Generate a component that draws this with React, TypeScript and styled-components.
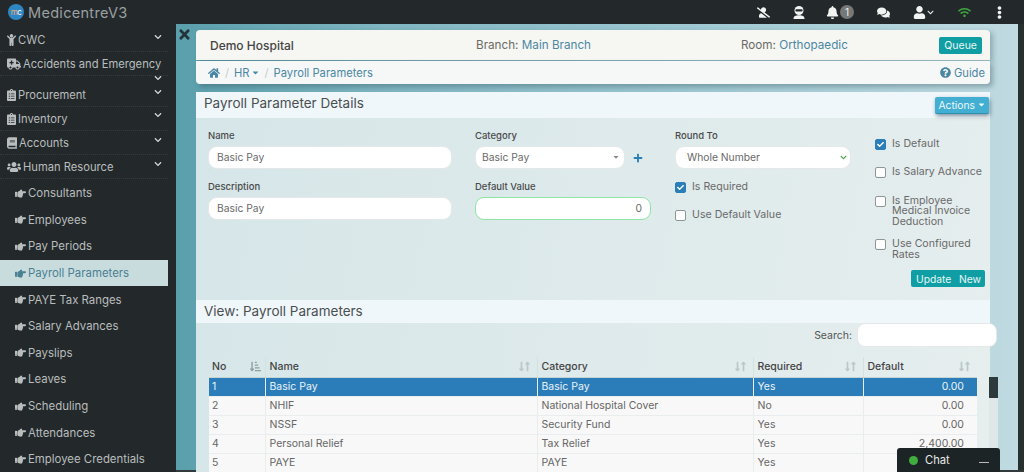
import React from 'react'
import styled, { createGlobalStyle } from 'styled-components'
import {
  FaAmbulance, FaBell, FaBook, FaCaretDown, FaCheck, FaChevronDown, FaChild, FaClipboardList,
  FaComments, FaEllipsisV, FaHandPointRight, FaHome, FaPlus, FaQuestionCircle, FaSortAmountDownAlt,
  FaTimes, FaUser, FaUserSlash, FaUsers, FaWifi, FaLongArrowAltDown, FaLongArrowAltUp,
} from 'react-icons/fa'

const GlobalStyle = createGlobalStyle`
  html, body { margin: 0; height: 100%; overflow: hidden; }
  body { font-family: Inter, "Liberation Sans", sans-serif; font-size: 11.5px; color: #555; }
  * { box-sizing: border-box; }
`

const Page = styled.div`
  width: 1024px;
  height: 472px;
  display: flex;
  flex-direction: column;
  overflow: hidden;
  position: relative;
  background: #222a2c;
`

const TopBar = styled.header`
  height: 24px;
  flex: none;
  display: flex;
  align-items: center;
  padding: 0 10px 0 8px;
  background: #23292b;
  color: #f2f4f4;
`

const Brand = styled.div`
  display: flex;
  align-items: center;
  gap: 4px;
  color: #9aa0a1;
  font-size: 14.5px;
  letter-spacing: 0.3px;
  flex: 1;
`

const Logo = styled.span`
  width: 16px;
  height: 16px;
  border-radius: 50%;
  background: #2f86c4;
  color: #fff;
  font-size: 8px;
  line-height: 16px;
  text-align: center;
  letter-spacing: -0.5px;
  em { font-style: normal; color: #f0b070; }
`

const TopIcons = styled.div`
  display: flex;
  align-items: center;
  font-size: 13px;
`

const TopIcon = styled.span<{ $w: number; $color?: string }>`
  width: ${p => p.$w}px;
  display: flex;
  align-items: center;
  justify-content: center;
  gap: 1px;
  color: ${p => p.$color || '#f2f4f4'};
`

const Badge = styled.span`
  width: 14px;
  height: 14px;
  border-radius: 50%;
  background: #777;
  color: #eee;
  font-size: 10px;
  line-height: 14px;
  text-align: center;
`

const Main = styled.div`
  flex: 1;
  min-height: 0;
  display: flex;
`

const Sidebar = styled.nav`
  width: 176px;
  flex: none;
  padding-right: 8px;
  background: #23292b;
  color: #b9bdbd;
`

const MenuItem = styled.div<{ $h: number; $pad: number; $iconW: number }>`
  position: relative;
  height: ${p => p.$h}px;
  padding: ${p => p.$pad}px 0 0 7px;
  display: flex;
  align-items: flex-start;
  gap: 2px;
  font-size: 11.2px;
  line-height: 18px;
  border-bottom: 1px dotted #353c3e;
  white-space: nowrap;
  svg.lead { width: ${p => p.$iconW}px; height: 12px; margin-top: 3px; flex: none; }
`

const Chevron = styled(FaChevronDown)<{ $top: number }>`
  position: absolute;
  right: 6px;
  top: ${p => p.$top}px;
  font-size: 8px;
  color: #d5d8d8;
`

const SubList = styled.div`
  margin-top: 1px;
`

const SubItem = styled.div<{ $active?: boolean }>`
  height: 26.6px;
  padding-left: 15px;
  display: flex;
  align-items: center;
  gap: 2px;
  font-size: 11.4px;
  color: ${p => (p.$active ? '#4a8094' : '#b9bdbd')};
  background: ${p => (p.$active ? '#c9dcdd' : 'transparent')};
  svg { font-size: 11px; }
`

const Content = styled.main`
  flex: 1;
  min-width: 0;
  display: flex;
  background: linear-gradient(90deg, #5a9fac 0%, #7fb6c1 25%, #a6cdd6 70%, #c0dbe1 100%);
  border-bottom: 2px solid #333a3c;
`

const CloseColumn = styled.div`
  width: 20px;
  flex: none;
  padding: 3px 0 0 1px;
  color: #23333a;
  font-size: 15px;
`

const Column = styled.div`
  width: 794px;
  flex: none;
  padding-top: 6px;
`

const HospitalBar = styled.div`
  height: 30px;
  display: grid;
  grid-template-columns: 266px 265px 1fr auto;
  align-items: center;
  padding: 0 8px 0 14px;
  background: #f6f6f3;
  border-radius: 4px 4px 0 0;
  box-shadow: 3px 2px 5px rgba(40, 70, 80, 0.3);
  font-size: 11.7px;
  color: #6b6b66;
`

const HospitalName = styled.b`
  font-weight: 500;
  color: #444;
  font-size: 12px;
`

const Link = styled.span`
  color: #4b87a3;
`

const QueueButton = styled.span`
  background: #0f9ea3;
  color: #e8f6f6;
  border-radius: 2px;
  padding: 0 5px;
  height: 17px;
  line-height: 17px;
  font-size: 10.5px;
`

const Breadcrumb = styled.div`
  height: 23px;
  margin-top: 1px;
  display: flex;
  align-items: center;
  gap: 5px;
  padding: 0 5px 0 12px;
  background: #f6f8f8;
  border-radius: 0 0 4px 4px;
  box-shadow: 3px 3px 5px rgba(40, 70, 80, 0.35);
  color: #4b87a3;
  font-size: 11.2px;
`

const Slash = styled.span`
  color: #c4cccc;
`

const HrCrumb = styled.span`
  display: flex;
  align-items: center;
  gap: 1px;
`

const Guide = styled.span`
  margin-left: auto;
  display: flex;
  align-items: center;
  gap: 3px;
  color: #4b87a3;
`

const Panel = styled.section`
  margin-top: 8px;
  background: linear-gradient(100deg, #d6e6e8, #e6eeee);
`

const PanelHead = styled.div<{ $h: number; $lift?: number }>`
  height: ${p => p.$h}px;
  display: flex;
  align-items: center;
  justify-content: space-between;
  padding: 0 1px 0 8px;
  background: #f0f7fb;
  font-size: 13.5px;
  color: #4a4f50;
  & > span:first-child { margin-top: ${p => -(p.$lift ?? 0)}px; }
`

const ActionsButton = styled.span`
  display: flex;
  align-items: center;
  gap: 2px;
  height: 17px;
  padding: 0 3px;
  background: #42aed2;
  color: #eef8fb;
  font-size: 10.3px;
  border-radius: 2px;
  box-shadow: 1px 2px 4px rgba(30, 60, 80, 0.55);
  border-bottom: 1px solid #2d8fb0;
`

const FormGrid = styled.div`
  height: 182px;
  display: grid;
  grid-template-columns: 267px 200px 200px 110px;
  padding: 12px 0 0 12px;
`

const Stack = styled.div<{ $w: number }>`
  width: ${p => p.$w}px;
  display: flex;
  flex-direction: column;
`

const Label = styled.label`
  display: block;
  font-size: 9.5px;
  font-weight: 500;
  color: #4a4a4a;
  line-height: 12px;
  margin-bottom: 4px;
`

const Field = styled.div<{ $right?: boolean; $focus?: boolean; $w?: number; $pl?: number; $pr?: number }>`
  height: 23px;
  width: ${p => (p.$w ? `${p.$w}px` : '100%')};
  display: flex;
  align-items: center;
  justify-content: ${p => (p.$right ? 'flex-end' : 'space-between')};
  padding: 0 ${p => p.$pr ?? 8}px 1px ${p => p.$pl ?? 8}px;
  background: #fff;
  border: 1px solid ${p => (p.$focus ? '#8fe6a4' : '#e4e8e8')};
  border-radius: 9px;
  font-size: 10.3px;
  color: #6a6a6a;
`

const Gap = styled.div<{ $h: number }>`
  height: ${p => p.$h}px;
  flex: none;
`

const Inline = styled.div`
  display: flex;
  align-items: center;
  justify-content: space-between;
`

const PlusIcon = styled(FaPlus)`
  font-size: 10px;
  color: #2a7fb8;
  margin-right: 8px;
`

const GreenChevron = styled(FaChevronDown)`
  font-size: 7px;
  color: #3b9a3b;
`

const CheckRow = styled.div<{ $mb?: number }>`
  display: flex;
  align-items: flex-start;
  gap: 6px;
  font-size: 10.6px;
  line-height: 10.4px;
  color: #6a6a6a;
  margin-bottom: ${p => p.$mb ?? 0}px;
`

const Box = styled.span<{ $on?: boolean }>`
  width: 11px;
  height: 11px;
  flex: none;
  border-radius: 2px;
  background: ${p => (p.$on ? '#2a7fb8' : '#fff')};
  border: 1px solid ${p => (p.$on ? '#2a7fb8' : '#8f9696')};
  color: #fff;
  display: flex;
  align-items: center;
  justify-content: center;
  font-size: 7px;
`

const UpdateBar = styled.div`
  align-self: flex-end;
  margin-top: 10px;
  width: 74px;
  height: 17px;
  display: flex;
  align-items: center;
  justify-content: space-between;
  padding: 0 4px 0 5px;
  background: #0f9ea3;
  color: #e8f6f6;
  border-radius: 2px;
  font-size: 10.3px;
`

const SearchRow = styled.div`
  display: flex;
  align-items: center;
  justify-content: flex-end;
  gap: 5px;
  margin-right: -7px;
  font-size: 10.5px;
`

const SearchInput = styled.div`
  width: 140px;
  height: 24px;
  background: #fff;
  border-radius: 8px;
  border: 1px solid #e4e8e8;
`

const TableWrap = styled.div`
  position: relative;
  margin: 10px 13px 0 13px;
`

const Table = styled.table`
  width: 768px;
  border-collapse: collapse;
  table-layout: fixed;
  font-size: 10.5px;
`

const Th = styled.th<{ $w: number }>`
  width: ${p => p.$w}px;
  height: 20px;
  padding: 0 4px 0 4px;
  font-weight: 500;
  text-align: left;
  color: #444;
  border-left: 1px solid #d5e0e0;
  border-bottom: 1px solid #c4d3d3;
  &:first-child { border-left: none; padding-left: 3px; }
`

const ThInner = styled.span`
  display: flex;
  align-items: center;
  justify-content: space-between;
`

const SortIcons = styled.span<{ $dark?: boolean }>`
  display: flex;
  font-size: 11px;
  color: ${p => (p.$dark ? '#8f9e9e' : '#bcc8c8')};
  svg + svg { margin-left: -5px; }
`

const Tr = styled.tr<{ $selected?: boolean }>`
  background: ${p => (p.$selected ? '#2a7db8' : '#f8f8f8')};
  color: ${p => (p.$selected ? '#eaf3f9' : '#666')};
`

const Td = styled.td<{ $right?: boolean }>`
  height: 19px;
  padding: 0 ${p => (p.$right ? '13px' : '4px')} 0 4px;
  text-align: ${p => (p.$right ? 'right' : 'left')};
  border-left: 1px solid #e9eded;
  border-bottom: 1px solid #e9eded;
  white-space: nowrap;
  &:first-child { border-left: none; padding-left: 3px; }
`

const ScrollTrack = styled.div`
  position: absolute;
  left: 780px;
  top: 20px;
  width: 9px;
  height: 120px;
  background: #dfe7e8;
`

const ScrollThumb = styled.div`
  height: 21px;
  background: #2c3a3c;
`

const RightEdge = styled.div`
  flex: 1;
  margin-left: 28px;
  background: #26302f;
`

const ChatWidget = styled.div`
  position: absolute;
  left: 897px;
  top: 448px;
  width: 103px;
  height: 24px;
  display: flex;
  align-items: center;
  gap: 7px;
  padding: 0 11px 0 12px;
  background: #1d2426;
  border-radius: 3px 3px 0 0;
  color: #e6e8e8;
  font-size: 11.2px;
`

const ChatDot = styled.span`
  width: 9px;
  height: 9px;
  border-radius: 50%;
  background: #3fae3f;
`

const ChatMin = styled.span`
  margin-left: auto;
  width: 10px;
  height: 1px;
  margin-top: 4px;
  background: #bbb;
`

const AgentIcon = () => (
  <svg width="14" height="13" viewBox="0 0 14 13">
    <circle cx="7" cy="4.5" r="4.5" fill="currentColor" />
    <rect x="3.4" y="3.2" width="7.2" height="2.2" rx="1" fill="#23292b" />
    <path d="M1.5 13 C1.5 10 3.5 9.2 7 9.2 C10.5 9.2 12.5 10 12.5 13 Z" fill="currentColor" />
  </svg>
)

const menu = [
  { icon: <FaChild className="lead" />, label: 'CWC', h: 28, pad: 7, top: 9, iconW: 9 },
  { icon: <FaAmbulance className="lead" />, label: 'Accidents and Emergency', h: 24, pad: 3, top: 22, iconW: 14 },
  { icon: <FaClipboardList className="lead" />, label: 'Procurement', h: 31, pad: 10, top: 12, iconW: 9 },
  { icon: <FaClipboardList className="lead" />, label: 'Inventory', h: 24, pad: 3, top: 4, iconW: 9 },
  { icon: <FaBook className="lead" />, label: 'Accounts', h: 24, pad: 3, top: 5, iconW: 10 },
  { icon: <FaUsers className="lead" />, label: 'Human Resource', h: 24, pad: 3, top: 5, iconW: 14 },
]

const subMenu = [
  'Consultants', 'Employees', 'Pay Periods', 'Payroll Parameters', 'PAYE Tax Ranges', 'Salary Advances',
  'Payslips', 'Leaves', 'Scheduling', 'Attendances', 'Employee Credentials',
]

const columns = [
  { name: 'No', w: 56 },
  { name: 'Name', w: 272 },
  { name: 'Category', w: 216 },
  { name: 'Required', w: 110 },
  { name: 'Default', w: 114 },
]

const rows = [
  ['1', 'Basic Pay', 'Basic Pay', 'Yes', '0.00'],
  ['2', 'NHIF', 'National Hospital Cover', 'No', '0.00'],
  ['3', 'NSSF', 'Security Fund', 'Yes', '0.00'],
  ['4', 'Personal Relief', 'Tax Relief', 'Yes', '2,400.00'],
  ['5', 'PAYE', 'PAYE', 'Yes', ''],
]

export default function App() {
  return (
    <Page>
      <GlobalStyle />
      <TopBar>
        <Brand><Logo><em>m</em>c</Logo>MedicentreV3</Brand>
        <TopIcons>
          <TopIcon $w={36}><FaUserSlash /></TopIcon>
          <TopIcon $w={36}><AgentIcon /></TopIcon>
          <TopIcon $w={46}><FaBell /><Badge>1</Badge></TopIcon>
          <TopIcon $w={40}><FaComments /></TopIcon>
          <TopIcon $w={41}><FaUser /><FaChevronDown size={7} /></TopIcon>
          <TopIcon $w={40} $color="#3fa53f"><FaWifi /></TopIcon>
          <TopIcon $w={30}><FaEllipsisV /></TopIcon>
        </TopIcons>
      </TopBar>
      <Main>
        <Sidebar>
          {menu.map(m => (
            <MenuItem key={m.label} $h={m.h} $pad={m.pad} $iconW={m.iconW}>
              {m.icon}{m.label}
              <Chevron $top={m.top} />
            </MenuItem>
          ))}
          <SubList>
            {subMenu.map(s => (
              <SubItem key={s} $active={s === 'Payroll Parameters'}>
                <FaHandPointRight />{s}
              </SubItem>
            ))}
          </SubList>
        </Sidebar>
        <Content>
          <CloseColumn><FaTimes /></CloseColumn>
          <Column>
            <HospitalBar>
              <HospitalName>Demo Hospital</HospitalName>
              <span>Branch: <Link>Main Branch</Link></span>
              <span>Room: <Link>Orthopaedic</Link></span>
              <QueueButton>Queue</QueueButton>
            </HospitalBar>
            <Breadcrumb>
              <FaHome size={12} />
              <Slash>/</Slash>
              <HrCrumb>HR <FaCaretDown size={9} /></HrCrumb>
              <Slash>/</Slash>
              <span>Payroll Parameters</span>
              <Guide><FaQuestionCircle size={11} />Guide</Guide>
            </Breadcrumb>
            <Panel>
              <PanelHead $h={26} $lift={4}>
                <span>Payroll Parameter Details</span>
                <ActionsButton>Actions <FaCaretDown size={9} /></ActionsButton>
              </PanelHead>
              <FormGrid>
                <Stack $w={244}>
                  <Label>Name</Label>
                  <Field>Basic Pay</Field>
                  <Gap $h={12} />
                  <Label>Description</Label>
                  <Field>Basic Pay</Field>
                </Stack>
                <Stack $w={176}>
                  <Label>Category</Label>
                  <Inline>
                    <Field $w={150} $pl={6} $pr={4}>Basic Pay<FaCaretDown size={8} color="#888" /></Field>
                    <PlusIcon />
                  </Inline>
                  <Gap $h={12} />
                  <Label>Default Value</Label>
                  <Field $right $focus>0</Field>
                </Stack>
                <Stack $w={176}>
                  <Label>Round To</Label>
                  <Field $pl={11} $pr={3}>Whole Number<GreenChevron /></Field>
                  <Gap $h={13} />
                  <CheckRow $mb={17}><Box $on><FaCheck /></Box>Is Required</CheckRow>
                  <CheckRow><Box />Use Default Value</CheckRow>
                </Stack>
                <Stack $w={110}>
                  <Gap $h={9} />
                  <CheckRow $mb={17}><Box $on><FaCheck /></Box>Is Default</CheckRow>
                  <CheckRow $mb={18}><Box />Is Salary Advance</CheckRow>
                  <CheckRow $mb={12}><Box /><span>Is Employee Medical Invoice Deduction</span></CheckRow>
                  <CheckRow><Box /><span>Use Configured Rates</span></CheckRow>
                  <UpdateBar><span>Update</span><span>New</span></UpdateBar>
                </Stack>
              </FormGrid>
              <PanelHead $h={23} $lift={1}><span>View: Payroll Parameters</span></PanelHead>
              <SearchRow>Search:<SearchInput /></SearchRow>
              <TableWrap>
                <Table>
                  <thead>
                    <tr>
                      {columns.map((c, i) => (
                        <Th key={c.name} $w={c.w}>
                          <ThInner>
                            {c.name}
                            {i === 0
                              ? <SortIcons $dark><FaSortAmountDownAlt /></SortIcons>
                              : <SortIcons><FaLongArrowAltDown /><FaLongArrowAltUp /></SortIcons>}
                          </ThInner>
                        </Th>
                      ))}
                    </tr>
                  </thead>
                  <tbody>
                    {rows.map((r, i) => (
                      <Tr key={r[0]} $selected={i === 0}>
                        {r.map((v, j) => <Td key={j} $right={j === 4}>{v}</Td>)}
                      </Tr>
                    ))}
                  </tbody>
                </Table>
                <ScrollTrack><ScrollThumb /></ScrollTrack>
              </TableWrap>
            </Panel>
          </Column>
          <RightEdge />
        </Content>
      </Main>
      <ChatWidget><ChatDot />Chat<ChatMin /></ChatWidget>
    </Page>
  )
}
